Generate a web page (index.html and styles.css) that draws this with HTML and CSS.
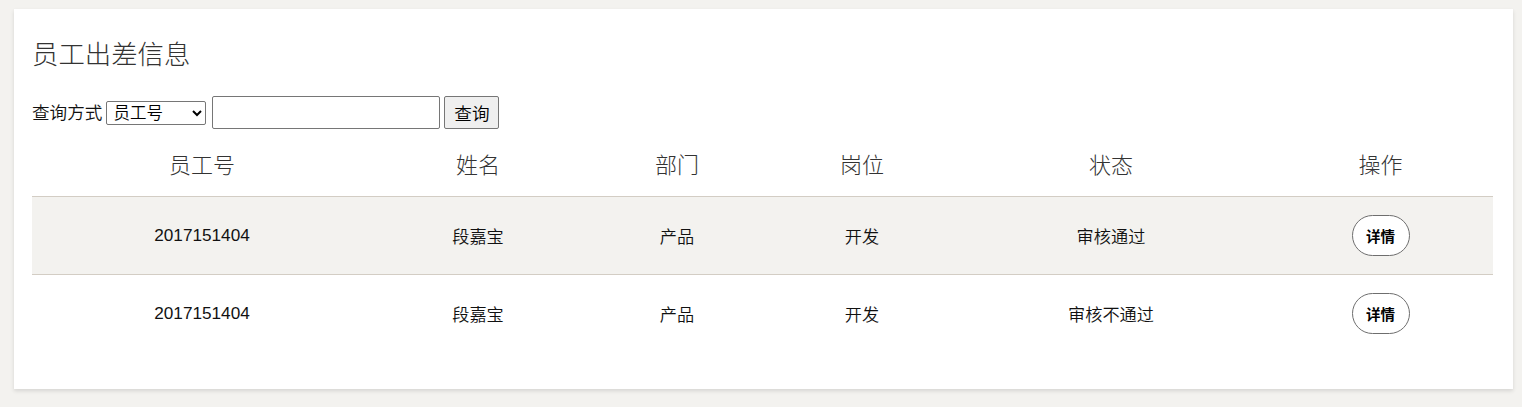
FILE: index.html
```html
<!DOCTYPE html>
<html lang="zh-CN">
<head>
<meta charset="utf-8">
<title>员工出差信息</title>
<link rel="stylesheet" href="styles.css">
</head>
<body>
<div class="card">
  <h2 class="title">员工出差信息</h2>
  <div class="toolbar">
    <span class="label">查询方式</span>
    <select class="sel">
      <option>员工号</option>
      <option>姓名</option>
    </select>
    <input class="query" type="text">
    <button class="btn">查询</button>
  </div>
  <table class="tbl">
    <colgroup>
      <col class="c1"><col class="c2"><col class="c3"><col class="c4"><col class="c5"><col class="c6">
    </colgroup>
    <thead>
      <tr><th>员工号</th><th>姓名</th><th>部门</th><th>岗位</th><th>状态</th><th>操作</th></tr>
    </thead>
    <tbody>
      <tr class="alt"><td>2017151404</td><td>段嘉宝</td><td>产品</td><td>开发</td><td>审核通过</td><td><button class="detail">详情</button></td></tr>
      <tr><td>2017151404</td><td>段嘉宝</td><td>产品</td><td>开发</td><td>审核不通过</td><td><button class="detail">详情</button></td></tr>
    </tbody>
  </table>
</div>
</body>
</html>
```
FILE: styles.css
```css
html, body {
  margin: 0;
  background: #f3f2ef;
}
body {
  padding: 9px 9px 19px 14px;
  font-family: "Liberation Sans", "Noto Sans CJK SC", sans-serif;
  color: #333;
}
.card {
  background: #fff;
  padding: 30px 20px 37px 18px;
  box-shadow: 0 2px 4px rgba(0,0,0,0.12);
}
.title {
  margin: 0 0 25px;
  font-size: 26.4px;
  line-height: 32px;
  font-weight: 300;
  color: #333;
}
.toolbar {
  display: flex;
  align-items: center;
  height: 33px;
  font-size: 17.6px;
}
.label {
  line-height: 20px;
  margin-right: 4px;
  font-weight: 350;
  color: #111;
}
.sel {
  width: 100px;
  height: 24px;
  font-family: "Liberation Sans", "Noto Sans CJK SC", sans-serif;
  font-size: 16.5px;
  font-weight: 350;
  color: #000;
  border: 1px solid #767676;
  border-radius: 2px;
  background: #fff;
  padding: 0 2px;
  margin-right: 5px;
}
.query {
  box-sizing: border-box;
  width: 228px;
  height: 33px;
  border: 1px solid #767676;
  border-radius: 2px;
  margin: 0 4px 0 1px;
  padding: 0 4px;
}
.btn {
  box-sizing: border-box;
  width: 55px;
  height: 33px;
  border: 1px solid #767676;
  border-radius: 2px;
  background: #efefef;
  font-family: "Liberation Sans", "Noto Sans CJK SC", sans-serif;
  font-size: 17.6px;
  font-weight: 350;
  color: #000;
  padding: 0;
}
.tbl {
  width: 100%;
  border-collapse: collapse;
  table-layout: fixed;
}
.c1 { width: 340px; }
.c2 { width: 212px; }
.c3 { width: 186px; }
.c4 { width: 184px; }
.c5 { width: 314px; }
.c6 { width: 225px; }
.tbl th {
  height: 67px;
  padding: 0;
  font-size: 22px;
  font-weight: 300;
  color: #333;
  text-align: center;
  border-bottom: 1px solid #d3cdc4;
}
.tbl td {
  height: 77px;
  padding: 0;
  font-size: 17.2px;
  font-weight: 350;
  text-align: center;
  color: #111;
}
.tbl tr.alt td {
  background: #f3f2ef;
  border-bottom: 1px solid #d3cdc4;
}
.detail {
  box-sizing: border-box;
  width: 58px;
  height: 41px;
  border: 1px solid #6e6e6e;
  border-radius: 21px;
  background: #fff;
  font-family: "Liberation Sans", "Noto Sans CJK SC", sans-serif;
  font-size: 14.5px;
  font-weight: 700;
  color: #000;
  padding: 0;
}
```
